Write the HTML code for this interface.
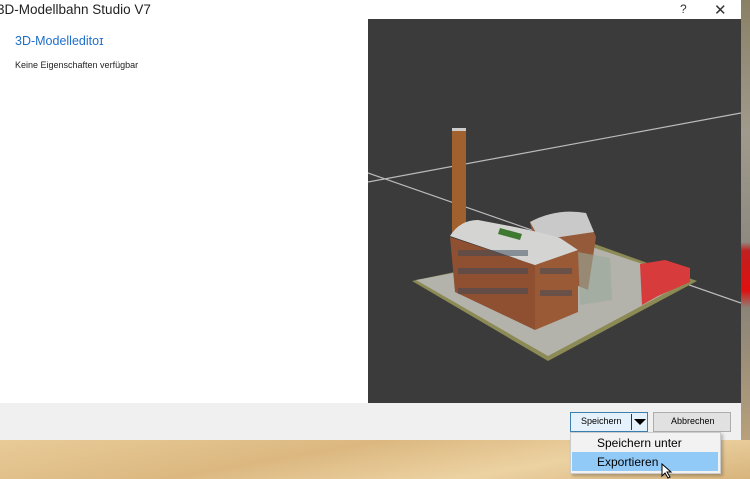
<!DOCTYPE html>
<html><head><meta charset="utf-8"><style>
*{margin:0;padding:0;box-sizing:border-box}
body{width:750px;height:479px;overflow:hidden;position:relative;font-family:"Liberation Sans",sans-serif;background:#e3c48f}
.abs{position:absolute}
</style></head><body>
<div class="abs" style="left:0;top:440px;width:750px;height:39px;background:linear-gradient(170deg,#e8cb98,#dcb880 40%,#ecd2a2 70%,#d8b47c)"></div>
<div class="abs" style="left:741px;top:0;width:9px;height:440px;background:linear-gradient(#8a8066,#a09a8c 30%,#8e8a80 55%,#c02020 57%,#e01010 66%,#8a8478 70%,#b8a07a)"></div>
<div class="abs" style="left:0;top:0;width:741px;height:440px;background:#fff"></div>
<div class="abs" style="left:-3px;top:2px;font-size:13.5px;color:#222">3D-Modellbahn Studio V7</div>
<div class="abs" style="left:680px;top:2px;font-size:12px;color:#333">?</div>
<div class="abs" style="left:714px;top:1px;font-size:15px;color:#333">✕</div>
<div class="abs" style="left:15px;top:34px;font-size:12.5px;color:#1e6fc8">3D-Modelleditoɪ</div>
<div class="abs" style="left:15px;top:60px;font-size:9px;color:#222">Keine Eigenschaften verfügbar</div>
<svg class="abs" style="left:368px;top:19px" width="373" height="385" viewBox="368 19 373 385">
<rect x="368" y="19" width="373" height="385" fill="#3b3b3b"/>
<line x1="368" y1="182" x2="741" y2="113" stroke="#bbb" stroke-width="1.2"/>
<line x1="368" y1="173" x2="741" y2="303" stroke="#bbb" stroke-width="1.2"/>
<polygon points="412,281 548,361 697,281 592,243" fill="#8c8a55"/>
<polygon points="416,280 548,356 690,280 592,247" fill="#b3b3ac"/>
<rect x="452" y="128" width="14" height="105" fill="#a0612e"/>
<rect x="452" y="128" width="14" height="3" fill="#ccc"/>
<polygon points="530,222 586,213 596,237 588,290 540,270" fill="#955a3a"/>
<path d="M530,222 Q556,208 586,213 L594,232 L540,240 Z" fill="#c9c9c9"/>
<polygon points="450,237 535,265 535,330 455,292" fill="#8e5030"/>
<polygon points="535,265 578,250 578,312 535,330" fill="#9a5a36"/>
<path d="M450,236 Q460,220 478,220 L510,226 Q540,232 560,238 L578,250 L535,265 Z" fill="#d4d4d2"/>
<polygon points="500,228 522,234 520,240 498,234" fill="#3d7a30"/>
<polygon points="578,252 610,258 612,300 580,305" fill="#9aa89a" opacity=".6"/>
<polygon points="640,264 665,260 690,268 690,282 658,296 642,305" fill="#d83b3b"/>
<g fill="#3a4a5a" opacity=".5">
<rect x="458" y="250" width="70" height="6"/><rect x="458" y="268" width="70" height="6"/><rect x="458" y="288" width="70" height="6"/><rect x="540" y="268" width="32" height="6"/><rect x="540" y="290" width="32" height="6"/>
</g>
</svg>
<div class="abs" style="left:0;top:403px;width:741px;height:37px;background:#f0f0f0"></div>
<div class="abs" style="left:570px;top:412px;width:78px;height:20px;background:#e5f1fb;border:1px solid #3c7fb1"></div>
<div class="abs" style="left:581px;top:416px;font-size:9px;color:#000">Speichern</div>
<div class="abs" style="left:631px;top:414px;width:1px;height:16px;background:#333"></div>
<div class="abs" style="left:634px;top:419px;width:0;height:0;border-left:6px solid transparent;border-right:6px solid transparent;border-top:6px solid #000"></div>
<div class="abs" style="left:653px;top:412px;width:78px;height:20px;background:#e1e1e1;border:1px solid #adadad"></div>
<div class="abs" style="left:671px;top:416px;font-size:9px;color:#000">Abbrechen</div>
<div class="abs" style="left:570px;top:432px;width:151px;height:42px;background:#f2f2f2;border:1px solid #ccc;box-shadow:2px 2px 3px rgba(0,0,0,.25)"></div>
<div class="abs" style="left:572px;top:452px;width:146px;height:19px;background:#91c9f7"></div>
<div class="abs" style="left:597px;top:436px;font-size:12px;color:#000">Speichern unter</div>
<div class="abs" style="left:597px;top:455px;font-size:12px;color:#000">Exportieren</div>
<svg class="abs" style="left:661px;top:463px" width="12" height="16"><path d="M1 1 L1 13 L4 10 L7 15 L9 14 L6 9 L10 9 Z" fill="#fff" stroke="#000" stroke-width="1"/></svg>
</body></html>
